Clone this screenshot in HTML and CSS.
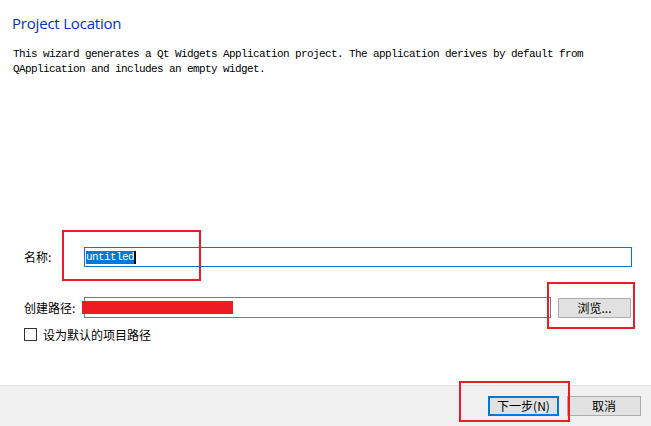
FILE: index.html
```html
<!DOCTYPE html>
<html lang="zh">
<head>
<meta charset="utf-8">
<title>Project Location</title>
<link rel="stylesheet" href="styles.css">
</head>
<body>
<div class="page">
  <main class="main">
    <h1 class="title">Project Location</h1>
    <p class="desc">This wizard generates a Qt Widgets Application project. The application derives by default from<br>QApplication and includes an empty widget.</p>
    <div class="spacer"></div>
    <div class="form">
      <div class="row row-name">
        <span class="label">名称:</span>
        <div class="input input-focus"><span class="sel">untitled</span><span class="caret"></span></div>
        <div class="mark mark-name"></div>
      </div>
      <div class="row row-path">
        <span class="label">创建路径:</span>
        <div class="input input-path"><span class="redact"></span></div>
        <button class="btn btn-browse">浏览...</button>
        <div class="mark mark-browse"></div>
      </div>
      <label class="check">
        <span class="box"></span>
        <span class="check-text">设为默认的项目路径</span>
      </label>
    </div>
  </main>
  <footer class="footer">
    <div class="btn-wrap">
      <button class="btn btn-next">下一步(N)</button>
      <div class="mark mark-next"></div>
    </div>
    <button class="btn btn-cancel">取消</button>
  </footer>
</div>
</body>
</html>
```

FILE: styles.css
```css
* { box-sizing: border-box; }
html, body { margin: 0; padding: 0; }
body {
  width: 651px;
  height: 426px;
  background: #ffffff;
  font-family: "Noto Sans CJK SC", "Noto Sans", sans-serif;
  font-size: 12px;
  color: #000;
  overflow: hidden;
}
.page {
  height: 426px;
  display: flex;
  flex-direction: column;
}
.main {
  flex: 1;
  display: flex;
  flex-direction: column;
  padding: 13px 19px 0 12px;
}
.title {
  margin: 0;
  font-family: "Open Sans", "Noto Sans", sans-serif;
  font-weight: 400;
  font-size: 15px;
  line-height: 20px;
  color: #0033bc;
  letter-spacing: -0.2px;
}
.desc {
  margin: 14px 0 0 1px;
  font-family: "Liberation Mono", monospace;
  font-size: 11px;
  letter-spacing: -0.6px;
  line-height: 15px;
}
.spacer { flex: 1; }
.form {
  padding-left: 12px;
  padding-bottom: 44px;
}
.row {
  position: relative;
  display: flex;
  align-items: center;
}
.label {
  width: 60px;
  flex: none;
  line-height: 20px;
}
.input {
  flex: 1;
  height: 20px;
  border: 1px solid #7a7a7a;
  background: #fff;
  display: flex;
  align-items: center;
  padding-left: 1px;
}
.input-focus {
  border-color: #0078d7;
}
.sel {
  background: #0078d7;
  color: #fff;
  font-family: "Liberation Mono", monospace;
  font-size: 11px;
  letter-spacing: -0.6px;
  line-height: 13px;
}
.caret {
  width: 2px;
  height: 13px;
  background: #000;
}
.row-path {
  margin-top: 30px;
}
.input-path {
  height: 21px;
  position: relative;
  margin-right: 7px;
}
.redact {
  position: absolute;
  left: -3px;
  top: 3px;
  width: 151px;
  height: 13px;
  background: #ed1c24;
}
.btn {
  font-family: "Noto Sans CJK SC", sans-serif;
  font-size: 12px;
  color: #000;
  background: #e1e1e1;
  border: 1px solid #adadad;
  height: 20px;
  padding: 0;
  line-height: 16px;
  margin: 0;
}
.btn-browse {
  width: 73px;
  margin-right: 1px;
}
.check {
  display: flex;
  align-items: center;
  margin-top: 10px;
  height: 13px;
}
.box {
  width: 13px;
  height: 13px;
  border: 1px solid #333;
  background: #fff;
  margin-right: 6px;
}
.check-text { line-height: 13px; }
.mark {
  position: absolute;
  border: 2px solid #ed1c24;
  pointer-events: none;
}
.mark-name {
  left: 38px;
  top: -17px;
  width: 139px;
  height: 51px;
}
.mark-browse {
  right: -3px;
  top: -15px;
  width: 88px;
  height: 47px;
}
.footer {
  height: 41px;
  background: #f0f0f0;
  border-top: 1px solid #dfdfdf;
  display: flex;
  justify-content: flex-end;
  align-items: flex-start;
  padding: 10px 10px 0 0;
  gap: 8px;
}
.btn-wrap { position: relative; }
.btn-next {
  width: 71px;
  border: 2px solid #0078d7;
}
.btn-cancel {
  width: 74px;
}
.mark-next {
  left: -29px;
  top: -15px;
  width: 111px;
  height: 41px;
}
```
